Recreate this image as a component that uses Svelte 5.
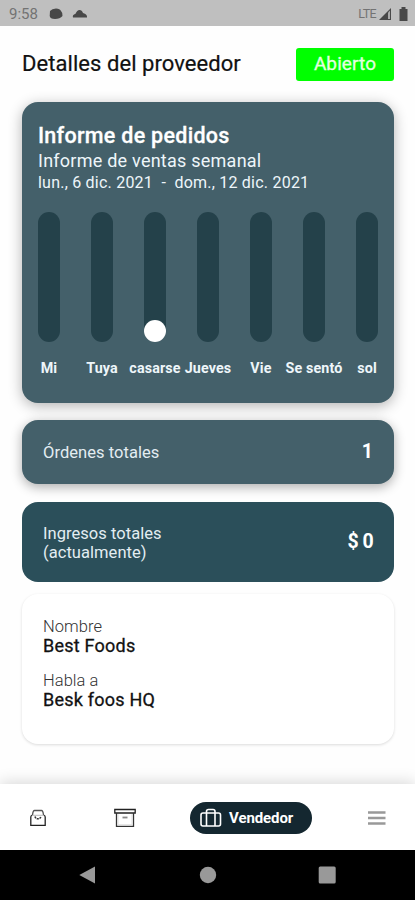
<script lang="ts">
	const days = [
		{ label: 'Mi', orders: 0 },
		{ label: 'Tuya', orders: 0 },
		{ label: 'casarse', orders: 1 },
		{ label: 'Jueves', orders: 0 },
		{ label: 'Vie', orders: 0 },
		{ label: 'Se sentó', orders: 0 },
		{ label: 'sol', orders: 0 }
	];

	const details = [
		{ term: 'Nombre', value: 'Best Foods' },
		{ term: 'Habla a', value: 'Besk foos HQ' }
	];
</script>

<div class="screen">
	<div class="status-bar">
		<span class="clock">9:58</span>
		<svg class="blob" width="14" height="12" viewBox="0 0 14 12">
			<path d="M1 3 Q3 .5 7 .5 Q11 .5 12 3 Q14 5 13.5 8 Q11 11 6 11 Q1 11 .7 8 Z" />
		</svg>
		<svg class="cloud" width="16" height="9" viewBox="0 0 16 9">
			<path d="M1 8.5 Q0 6 3.5 4.8 Q5 1 7.5 1 Q10 1 11 4 Q15.5 5 15 8.5 Z" />
		</svg>
		<span class="network">LTE</span>
		<svg class="signal" width="14" height="14" viewBox="0 0 14 14">
			<path d="M1 13 L13 1 V13 Z" />
			<path class="gap" d="M10 5.5 L12 3.5 V12 H10 Z" />
		</svg>
		<svg class="battery" width="9" height="14" viewBox="0 0 9 14">
			<path d="M2.5 0 H6.5 V2 H8.5 V14 H.5 V2 H2.5 Z" />
		</svg>
	</div>

	<header>
		<h1>Detalles del proveedor</h1>
		<button type="button" class="open-badge">Abierto</button>
	</header>

	<main>
		<section class="card report">
			<h2>Informe de pedidos</h2>
			<p class="subtitle">Informe de ventas semanal</p>
			<p class="range">lun., 6 dic. 2021&nbsp; -&nbsp; dom., 12 dic. 2021</p>
			<div class="chart">
				{#each days as day}
					<div class="day">
						<div class="track">
							{#if day.orders > 0}
								<div class="dot"></div>
							{/if}
						</div>
						<span>{day.label}</span>
					</div>
				{/each}
			</div>
		</section>

		<section class="card total orders">
			<span class="total-label">Órdenes totales</span>
			<strong>1</strong>
		</section>

		<section class="card total revenue">
			<span class="total-label">Ingresos totales<br />(actualmente)</span>
			<strong>$ 0</strong>
		</section>

		<dl class="card info">
			{#each details as item}
				<dt>{item.term}</dt>
				<dd>{item.value}</dd>
			{/each}
		</dl>
	</main>

	<nav>
		<button type="button" class="tab" aria-label="Pedidos">
			<svg width="18" height="18" viewBox="0 0 18 18">
				<path d="M3.5 6 Q4 1.5 5.5 1.5 H12.5 Q14 1.5 14.5 6" stroke="#555" stroke-width="1.3" />
				<path d="M3.5 6 Q1.8 6.5 1.8 8 V16.3 H16.2 V8 Q16.2 6.5 14.5 6" stroke="#222" stroke-width="1.3" />
				<path d="M3.5 6.3 H14.5" stroke="#bbb" />
				<path d="M6 7.5 Q6.5 9.8 9 9.8 Q11.5 9.8 12 7.5" stroke="#333" stroke-width="1.5" stroke-dasharray="2 .8" />
			</svg>
		</button>
		<button type="button" class="tab products" aria-label="Productos">
			<svg width="22" height="20" viewBox="0 0 22 20">
				<path d="M.8 1.5 H21.2 V5 H.8 Z" stroke="#222" stroke-width="1.3" />
				<path d="M2.5 5 V18.3 H19.5 V5" stroke="#333" stroke-width="1.3" />
				<path d="M4 6.3 V16.8 H18 V6.3" stroke="#ddd" />
				<path d="M8.5 9.5 H13.5" stroke="#888" stroke-width="1.8" />
			</svg>
		</button>
		<button type="button" class="tab active">
			<svg width="22" height="20" viewBox="0 0 22 20">
				<rect x="1" y="5" width="19.5" height="13" rx="2" />
				<path d="M6.5 18 V3.5 Q6.5 1.5 8.5 1.5 H13 Q15 1.5 15 3.5 V18" />
			</svg>
			<span>Vendedor</span>
		</button>
		<button type="button" class="tab more" aria-label="Más">
			<svg width="18" height="14" viewBox="0 0 18 14">
				<path d="M0 1.5 H17.5 M0 7 H17.5 M0 12.5 H17.5" stroke="#999" stroke-width="2.4" />
			</svg>
		</button>
	</nav>

	<div class="system-bar">
		<svg width="18" height="18" viewBox="0 0 18 18">
			<path d="M.3 9 L16 .5 V17.5 Z" />
		</svg>
		<svg width="18" height="18" viewBox="0 0 18 18">
			<circle cx="9" cy="9" r="8.2" />
		</svg>
		<svg width="18" height="18" viewBox="0 0 18 18">
			<rect x=".7" y=".5" width="17" height="17" rx="1.5" />
		</svg>
	</div>
</div>

<style>
	:global(body) {
		margin: 0;
		background: #fff;
	}

	.screen {
		width: 415px;
		height: 900px;
		overflow: hidden;
		display: flex;
		flex-direction: column;
		background: #fefefe;
		color: #111;
		font-family: Roboto, 'Liberation Sans', sans-serif;
	}

	h1,
	h2,
	p,
	dl,
	dd {
		margin: 0;
	}

	button {
		border: none;
		padding: 0;
		font-family: inherit;
	}

	svg {
		display: block;
		flex: none;
	}

	.status-bar {
		display: flex;
		align-items: center;
		height: 26px;
		padding: 1px 7px 0 9px;
		box-sizing: border-box;
		background: #bfbfbf;
		color: #737373;
		fill: #484848;
	}

	.clock {
		width: 40px;
		font-size: 15px;
	}

	.cloud {
		margin-left: 9px;
	}

	.network {
		margin-left: auto;
		font-size: 12.5px;
		letter-spacing: -0.6px;
	}

	.signal {
		margin: 0 7px 0 2px;
	}

	.gap {
		fill: #aaa;
	}

	header {
		display: flex;
		align-items: center;
		justify-content: space-between;
		height: 76px;
		padding: 0 21px 0 22px;
		box-sizing: border-box;
	}

	h1 {
		margin-top: -2px;
		font-size: 22px;
		font-weight: 400;
		letter-spacing: 0.06px;
		-webkit-text-stroke: 0.2px #111;
	}

	.open-badge {
		width: 98px;
		height: 33px;
		padding-bottom: 2px;
		border-radius: 3px;
		background: #00ff00;
		color: #e4ffe0;
		font-size: 19px;
		letter-spacing: 0.1px;
		-webkit-text-stroke: 0.3px #e4ffe0;
	}

	main {
		flex: 1;
		padding: 0 21px 0 22px;
	}

	.card {
		box-sizing: border-box;
		border-radius: 16px;
	}

	.report {
		height: 301px;
		padding: 21px 16px 0;
		background: #44606a;
		box-shadow: 0 3px 14px rgba(0, 0, 0, 0.3);
		color: #eef6fa;
	}

	h2 {
		font-size: 21.5px;
		font-weight: 500;
		letter-spacing: 0.28px;
		line-height: 26px;
		color: #fff;
		-webkit-text-stroke: 0.3px #fff;
	}

	.subtitle {
		font-size: 18px;
		letter-spacing: 0.24px;
		line-height: 23px;
	}

	.range {
		font-size: 16px;
		letter-spacing: 0.22px;
		line-height: 21px;
	}

	.chart {
		display: flex;
		justify-content: space-between;
		margin-top: 19px;
	}

	.day {
		display: flex;
		flex-direction: column;
		align-items: center;
		width: 22px;
	}

	.day span {
		margin-top: 16px;
		font-size: 14.3px;
		font-weight: 700;
		letter-spacing: 0.15px;
		line-height: 20px;
		white-space: nowrap;
	}

	.track {
		display: flex;
		align-items: flex-end;
		width: 22px;
		height: 130px;
		border-radius: 11px;
		background: #24414a;
	}

	.dot {
		width: 22px;
		height: 22px;
		border-radius: 50%;
		background: #fff;
	}

	.total {
		display: flex;
		align-items: center;
		justify-content: space-between;
		padding: 0 21px;
		color: #e3edf2;
	}

	.total-label {
		padding-top: 1px;
		font-size: 16.5px;
		letter-spacing: 0.05px;
		line-height: 19px;
	}

	.total strong {
		margin-top: -1px;
		font-size: 19.5px;
		font-weight: 700;
		color: #fff;
	}

	.orders {
		height: 64px;
		margin-top: 17px;
		background: #44606a;
		box-shadow: 0 3px 12px rgba(0, 0, 0, 0.33);
	}

	.revenue {
		height: 80px;
		margin-top: 18px;
		background: #2b4f5a;
	}

	.revenue strong {
		letter-spacing: -0.6px;
	}

	.info {
		height: 150px;
		margin-top: 12px;
		padding: 23px 21px 0;
		background: #fff;
		box-shadow: 0 1px 3px rgba(0, 0, 0, 0.14);
	}

	dt {
		font-size: 16.5px;
		font-weight: 300;
		letter-spacing: 0.05px;
		line-height: 19px;
		color: #333;
	}

	dd {
		margin-bottom: 15px;
		font-size: 18px;
		letter-spacing: 0.23px;
		line-height: 20px;
		-webkit-text-stroke: 0.3px #111;
	}

	nav {
		display: flex;
		align-items: center;
		height: 66px;
		padding: 1px 29px 0;
		box-sizing: border-box;
		background: #fff;
		box-shadow: 0 -2px 14px rgba(0, 0, 0, 0.15);
	}

	.tab {
		display: flex;
		align-items: center;
		background: none;
		fill: none;
	}

	.products {
		margin-left: 67px;
	}

	.active {
		gap: 7px;
		width: 122px;
		height: 32px;
		margin-left: 54px;
		padding-left: 10px;
		box-sizing: border-box;
		border-radius: 16px;
		background: #142730;
		color: #fff;
		font-size: 15px;
		font-weight: 700;
		stroke: #fff;
		stroke-width: 1.6;
	}

	.active span {
		stroke: none;
		letter-spacing: -0.1px;
	}

	.more {
		margin-left: auto;
	}

	.system-bar {
		display: flex;
		align-items: center;
		justify-content: space-between;
		height: 50px;
		padding: 0 79px;
		background: #000;
		fill: #999;
	}
</style>
